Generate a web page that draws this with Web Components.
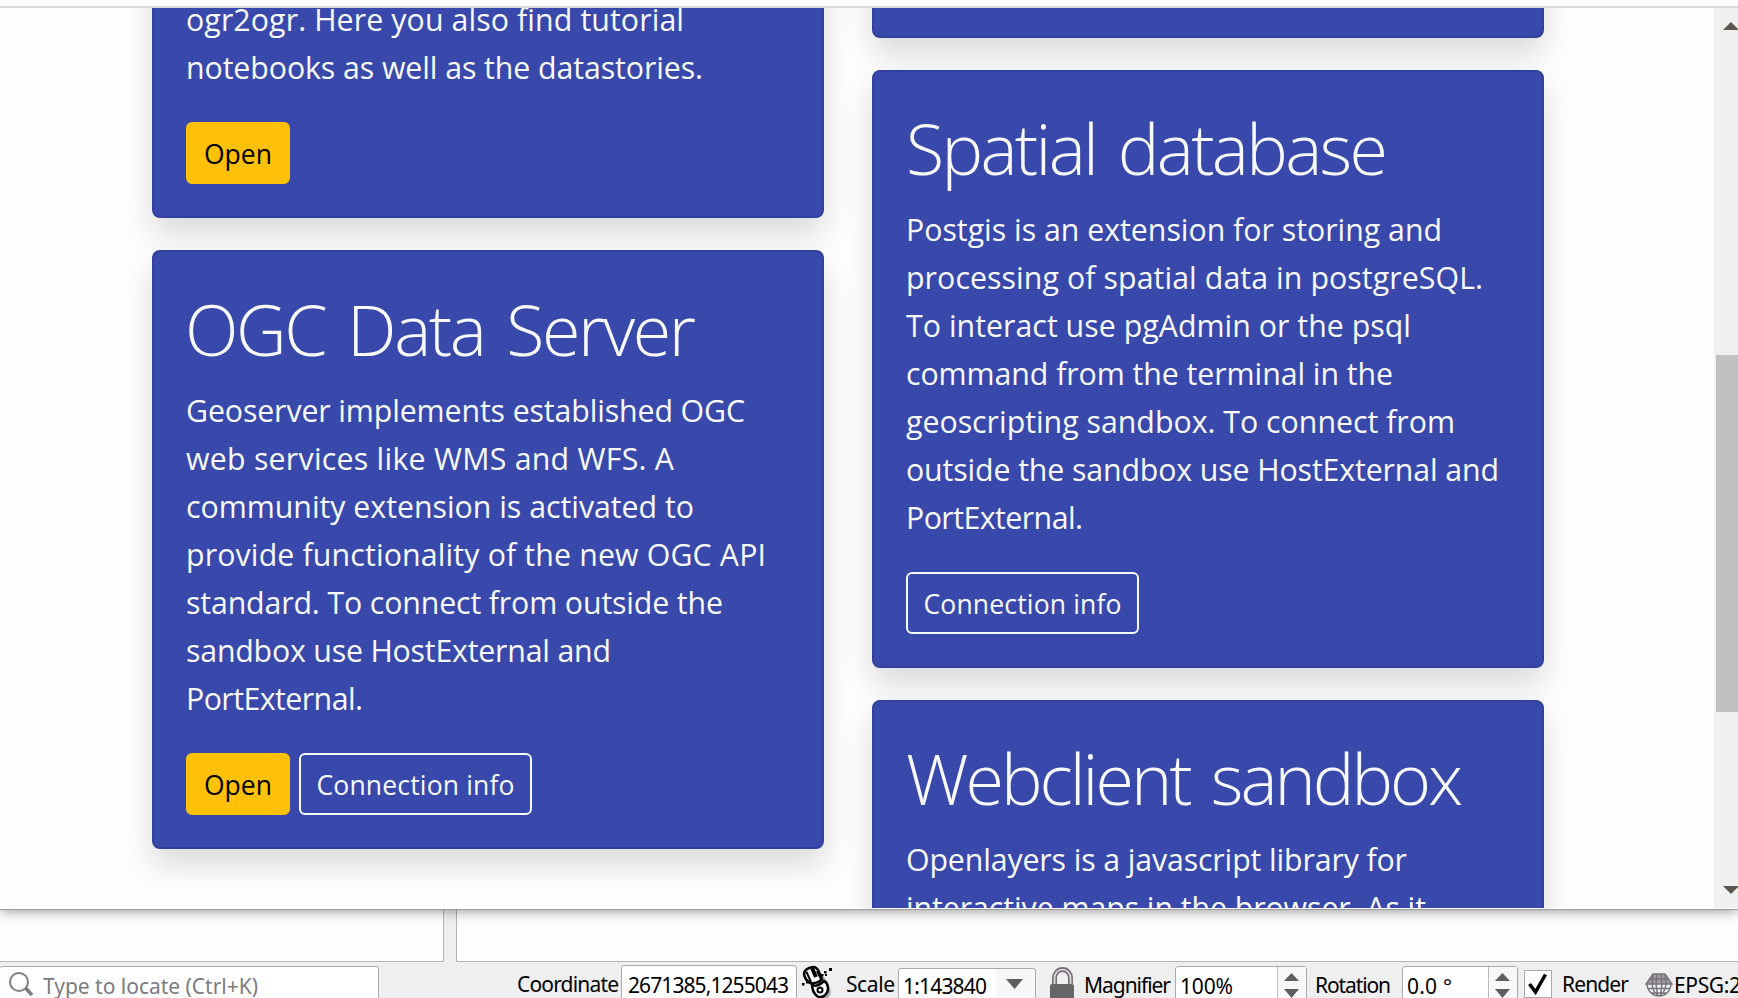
<!DOCTYPE html>
<html lang="en"><head><meta charset="utf-8"><title>Geo sandbox</title>
<style>html,body{margin:0;height:100%;overflow:hidden;background:#fefefe;font-family:"Open Sans","Noto Sans",sans-serif}</style></head>
<body><app-root></app-root>
<script>
const def=(name,html,after)=>customElements.define(name,class extends HTMLElement{
  connectedCallback(){if(this.shadowRoot)return;const t=document.createElement('template');t.innerHTML=html;
    this.attachShadow({mode:'open'}).append(t.content.cloneNode(true));if(after)after(this)}});

// One line of text, tracked so that it fills the width given in "w".
def('fit-line',`<style>:host{display:block;white-space:pre}span{display:inline-block}</style><span><slot></slot></span>`,el=>{
  const s=el.shadowRoot.querySelector('span'),w=+el.getAttribute('w'),n=el.textContent.length;
  s.style.letterSpacing=((w-s.getBoundingClientRect().width)/(n-1))+'px';
  el.style.width=w+'px';
});
def('card-button',`<style>:host{display:flex;box-sizing:border-box;height:62px;width:233px;border:2px solid #f8f9fa;border-radius:6px;color:#f8f9fa;font-size:26.5px;line-height:60px;justify-content:center}
:host([primary]){width:104px;background:#ffc107;border-color:#ffc107;color:#000}</style><slot></slot>`);
def('info-card',`<style>:host{display:flex;flex-direction:column;flex:none;box-sizing:border-box;width:672px;padding:32px;border:2px solid #30409b;border-radius:8px;background:#3949ab;color:#f8f9fa;box-shadow:0 16px 32px rgba(0,0,0,.15);font-size:30.3px;line-height:48px}
.t{box-sizing:border-box;height:86px;font-size:70px;font-weight:300;line-height:86px;margin-bottom:16px;padding-top:1px;word-spacing:6px}:host([partial]) .t{display:none}
.b{display:flex;gap:9px;margin-top:30px}</style><div class="t"><slot name="title"></slot></div><div><slot></slot></div><div class="b"><slot name="actions"></slot></div>`);
def('scroll-bar',`<style>:host{display:flex;flex-direction:column;width:24px;flex:none;background:#f0f0f0;overflow:hidden}svg{display:block;flex:none;width:34px;height:34px}i{display:block;flex:none;height:357px;margin:313px 0 0 2px;background:#c1c1c1}.g{flex:1}</style>
<svg><path d="M9 22L17 14L25 22Z" fill="#5b574e"/></svg><i></i><div class="g"></div><svg><path d="M9 12L17 20L25 12Z" fill="#5b574e"/></svg>`);
def('web-page',`<style>:host{display:flex;flex-direction:column;height:910px;flex:none;box-sizing:border-box;background:#fefefe;border-bottom:1px solid #9d9d9d;box-shadow:0 1px 12px rgba(0,0,0,.42);position:relative;z-index:1}
.top{height:6px;flex:none;border-bottom:2px solid #dadada;background:#fff}.v{display:flex;height:900px;overflow:hidden;margin-bottom:1px}
.m{flex:1;display:flex;gap:48px;padding-left:152px;overflow:hidden}.c{display:flex;flex-direction:column;gap:32px;width:672px}
.l{margin-top:-46px}.r{margin-top:-50px}</style>
<div class="top"></div><div class="v"><div class="m"><div class="c l">
<info-card partial><fit-line w="498">ogr2ogr. Here you also find tutorial</fit-line><fit-line w="517">notebooks as well as the datastories.</fit-line>
<card-button primary slot="actions"><fit-line w="68">Open</fit-line></card-button></info-card>
<info-card style="height:599px;padding-top:33px"><fit-line slot="title" w="511" style="margin-left:-1px">OGC Data Server</fit-line>
<fit-line w="559">Geoserver implements established OGC</fit-line><fit-line w="488">web services like WMS and WFS. A</fit-line><fit-line w="508">community extension is activated to</fit-line><fit-line w="580">provide functionality of the new OGC API</fit-line><fit-line w="537">standard. To connect from outside the</fit-line><fit-line w="425">sandbox use HostExternal and</fit-line><fit-line w="177">PortExternal.</fit-line>
<card-button primary slot="actions"><fit-line w="68">Open</fit-line></card-button><card-button slot="actions"><fit-line w="198">Connection info</fit-line></card-button></info-card>
</div><div class="c r">
<info-card partial style="height:80px"></info-card>
<info-card><fit-line slot="title" w="482">Spatial database</fit-line>
<fit-line w="536">Postgis is an extension for storing and</fit-line><fit-line w="577">processing of spatial data in postgreSQL.</fit-line><fit-line w="505">To interact use pgAdmin or the psql</fit-line><fit-line w="487">command from the terminal in the</fit-line><fit-line w="549">geoscripting sandbox. To connect from</fit-line><fit-line w="593">outside the sandbox use HostExternal and</fit-line><fit-line w="177">PortExternal.</fit-line>
<card-button slot="actions"><fit-line w="198">Connection info</fit-line></card-button></info-card>
<info-card><fit-line slot="title" w="557">Webclient sandbox</fit-line><fit-line w="501">Openlayers is a javascript library for</fit-line><fit-line w="520">interactive maps in the browser. As it</fit-line></info-card>
</div></div><scroll-bar></scroll-bar></div>`);
def('dock-row',`<style>:host{display:flex;gap:12px;height:52px;flex:none;background:#efefef}div{box-sizing:border-box;background:#fefefe;border:1px solid #b4b4b4;border-top:0}.a{width:444px;border-left:0}.b{flex:1;border-right:0}</style><div class="a"></div><div class="b"></div>`);
def('spin-box',`<style>:host{display:flex;flex:none;box-sizing:border-box;height:40px;margin-top:4px;border:1px solid #aaa;border-radius:3px;background:#fff;padding-left:4px;justify-content:space-between;line-height:39px}svg{width:28px;height:34px;border-left:1px solid #bbb;background:#f8f8f8;flex:none}</style><slot></slot><svg><path d="M6 14L13.500 6L21 14ZM6 22H21L13.500 31Z" fill="#5e5e5e"/></svg>`);
def('status-bar',`<style>:host{display:flex;height:36px;overflow:hidden;background:#efefef;color:#000;font-family:"Noto Sans",sans-serif;font-size:21px;line-height:45px;align-items:flex-start}
.box{flex:none;box-sizing:border-box;height:44px;border:1px solid #aaa;border-radius:3px;background:#fff;display:flex;line-height:39px}
svg{display:block;flex:none}fit-line{flex:none}</style>
<div class="box" style="width:379px;margin-top:4px;border-left:0;color:#7b7b80;padding-left:8px"><svg width="35" height="32" fill="none" stroke="#827b82"><circle cx="11" cy="15" r="9" stroke-width="2"/><path d="M17.500 21L24 28" stroke-width="3.500"/></svg><fit-line w="215">Type to locate (Ctrl+K)</fit-line></div>
<fit-line w="102" style="margin-left:138px">Coordinate</fit-line>
<div class="box" style="width:176px;margin:3px 0 0 2px;padding-left:6px"><fit-line w="161">2671385,1255043</fit-line></div>
<svg width="32" height="36" style="margin-left:5px"><path d="M20 14C25 17 27 21 26 24C31 28 29 34 24 38H14Z" fill="#aaa"/><g stroke="#000" stroke-width="2.500" fill="#fff" stroke-linejoin="round"><path d="M10 22C13 26 19 22 22 19C27 22 27 28 24 32Q20 37 15 34Q10 30 10 22Z"/><path d="M2 12Q3 6 11 5Q15 5 17 10L20 17Q16 22 8 21Q3 18 2 12Z"/><path d="M10 6L14 15" stroke-width="4"/><path d="M4.500 10L9 20M15 9L19 17" stroke-width="2"/><circle cx="18" cy="28" r="2.500" stroke-width="2"/></g><path d="M19 12h2.500v2.500h-2.500zM22 9h2.500v2.500h-2.500zM23 12h2v2h-2zM27 6h3v3h-3zM0 21h2.500v2.500H0zM4 19h2.500v2.500H4z" fill="#000"/></svg>
<fit-line w="49" style="margin-left:12px">Scale</fit-line>
<div class="box" style="width:138px;margin:6px 0 0 3px;padding-left:4px;line-height:35px;background:linear-gradient(90deg,#fff 70%,#f7f7f7 72%)"><fit-line w="84">1:143840</fit-line><svg width="40" height="30"><path d="M19 10H36L27.500 20Z" fill="#5e5e5e"/></svg></div>
<svg width="26" height="36" style="margin-left:14px"><path d="M4.500 22V16a8 8.500 0 0 1 16 0V22" stroke="#777078" stroke-width="5" fill="none"/><path d="M4.500 22V16a8 8.500 0 0 1 16 0V22" stroke="#ddd" stroke-width="1.700" fill="none"/><rect x="0" y="22" width="24" height="16" rx="2" fill="#666"/></svg>
<fit-line w="87" style="margin-left:8px;line-height:46px">Magnifier</fit-line>
<spin-box style="width:132px;margin-left:4px"><fit-line w="53">100%</fit-line></spin-box>
<fit-line w="76" style="margin-left:8px;line-height:46px">Rotation</fit-line>
<spin-box style="width:116px;margin-left:11px"><fit-line w="45">0.0 °</fit-line></spin-box>
<svg width="28" height="36" style="margin-left:6px"><rect x=".5" y="8.500" width="27" height="27" fill="#fff" stroke="#aaa"/><path d="M5.500 22L11.500 30L21.500 12.500" stroke="#000" stroke-width="3.500" fill="none"/></svg>
<fit-line w="67" style="margin-left:10px">Render</fit-line>
<svg width="28" height="36" style="margin-left:16px" fill="none" stroke="#77737b" stroke-width="1.400"><path d="M8 12H20L27 22H1Z" fill="#a09ca2"/><path d="M2 22C3 38 25 38 26 22M8 12L7 22Q8 31 14 34Q20 31 21 22L20 12M12 12L11 22L12.500 33M16 12L17 22L15.500 33M4.500 17H23.500M3.500 26.500H24.500M7 31H21"/></svg>
<fit-line w="67" style="margin-left:1px;line-height:46px">EPSG:2</fit-line>`);
def('app-root',`<style>:host{display:flex;flex-direction:column;height:998px;width:1738px;overflow:hidden}</style><web-page></web-page><dock-row></dock-row><status-bar></status-bar>`);
</script></body></html>
